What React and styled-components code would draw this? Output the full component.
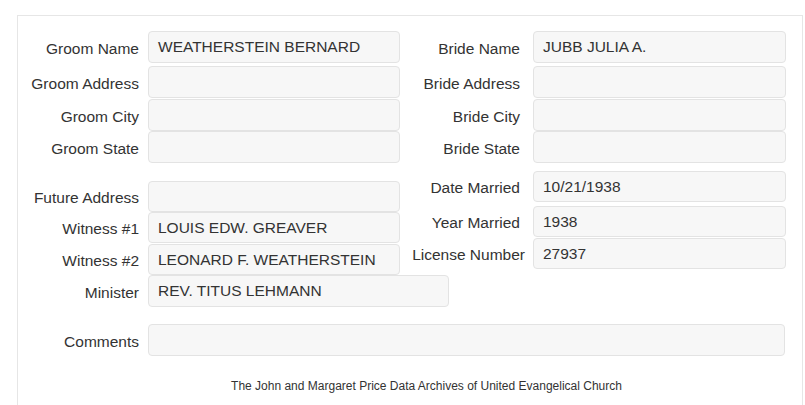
import React from "react";
import styled, { createGlobalStyle } from "styled-components";

const GlobalStyle = createGlobalStyle`
  html, body {
    margin: 0;
    padding: 0;
    background: #ffffff;
  }
  body {
    font-family: "Liberation Sans", Arial, sans-serif;
    color: #333333;
  }
`;

const upperLeft = [
  { label: "Groom Name", value: "WEATHERSTEIN BERNARD", top: 0 },
  { label: "Groom Address", value: "", top: 3 },
  { label: "Groom City", value: "", top: 1 },
  { label: "Groom State", value: "", top: 0 },
];

const upperRight = [
  { label: "Bride Name", value: "JUBB JULIA A.", top: 0 },
  { label: "Bride Address", value: "", top: 3 },
  { label: "Bride City", value: "", top: 1 },
  { label: "Bride State", value: "", top: 0 },
];

const lowerLeft = [
  { label: "Future Address", value: "", top: 0 },
  { label: "Witness #1", value: "LOUIS EDW. GREAVER", top: 0 },
  { label: "Witness #2", value: "LEONARD F. WEATHERSTEIN", top: 1 },
  { label: "Minister", value: "REV. TITUS LEHMANN", top: 0, wide: true },
];

const lowerRight = [
  { label: "Date Married", value: "10/21/1938", top: 0 },
  { label: "Year Married", value: "1938", top: 4 },
  { label: "License Number", value: "27937", top: 1, tight: true },
];

const Page = () => (
  <>
    <GlobalStyle />
    <Card>
      <Section>
        <Column>
          {upperLeft.map((r) => (
            <Row key={r.label} $top={r.top}>
              <Label $width={121} $gap={9}>{r.label}</Label>
              <Field $width={252}>{r.value}</Field>
            </Row>
          ))}
        </Column>
        <Column>
          {upperRight.map((r) => (
            <Row key={r.label} $top={r.top}>
              <Label $width={120} $gap={13}>{r.label}</Label>
              <Field $width={253}>{r.value}</Field>
            </Row>
          ))}
        </Column>
      </Section>

      <LowerSection>
        <Column $offset={10}>
          {lowerLeft.map((r) => (
            <Row key={r.label} $top={r.top}>
              <Label $width={121} $gap={9}>{r.label}</Label>
              <Field $width={r.wide ? 301 : 252} $height={r.wide ? 32 : 31}>
                {r.value}
              </Field>
            </Row>
          ))}
        </Column>
        <Column>
          {lowerRight.map((r) => (
            <Row key={r.label} $top={r.top}>
              <Label $width={r.tight ? 125 : 120} $gap={r.tight ? 8 : 13}>
                {r.label}
              </Label>
              <Field $width={253} $height={31}>{r.value}</Field>
            </Row>
          ))}
        </Column>
      </LowerSection>

      <CommentsRow>
        <Label $width={121} $gap={9}>Comments</Label>
        <Field $width={637}></Field>
      </CommentsRow>

      <Footer>
        The John and Margaret Price Data Archives of United Evangelical Church
      </Footer>
    </Card>
  </>
);

export default Page;

const Card = styled.div`
  margin: 15px 2px 0 17px;
  border: 1px solid #e6e6e6;
  border-bottom: none;
  padding: 15px 0 30px 0;
  min-height: 400px;
  box-sizing: border-box;
`;

const Section = styled.div`
  display: grid;
  grid-template-columns: 382px 386px;
  align-items: start;
`;

const LowerSection = styled(Section)`
  margin-top: 8px;
`;

const Column = styled.div`
  display: flex;
  flex-direction: column;
  padding-top: ${(p) => p.$offset || 0}px;
`;

const Row = styled.div`
  display: flex;
  align-items: center;
  margin-top: ${(p) => p.$top}px;
`;

const Label = styled.div`
  width: ${(p) => p.$width}px;
  margin-right: ${(p) => p.$gap}px;
  flex-shrink: 0;
  text-align: right;
  white-space: nowrap;
  font-size: 15.5px;
  color: #333333;
  padding-top: 3px;
`;

const Field = styled.div`
  width: ${(p) => p.$width}px;
  height: ${(p) => p.$height || 32}px;
  flex-shrink: 0;
  box-sizing: border-box;
  background: #f7f7f7;
  border: 1px solid #e3e3e3;
  border-radius: 4px;
  padding: 0 9px;
  display: flex;
  align-items: center;
  font-size: 15.5px;
  color: #333333;
  white-space: nowrap;
`;

const CommentsRow = styled(Row)`
  margin-top: 17px;
`;

const Footer = styled.div`
  margin-top: 23px;
  text-align: center;
  font-size: 12px;
  color: #333333;
  padding-left: 33px;
`;
